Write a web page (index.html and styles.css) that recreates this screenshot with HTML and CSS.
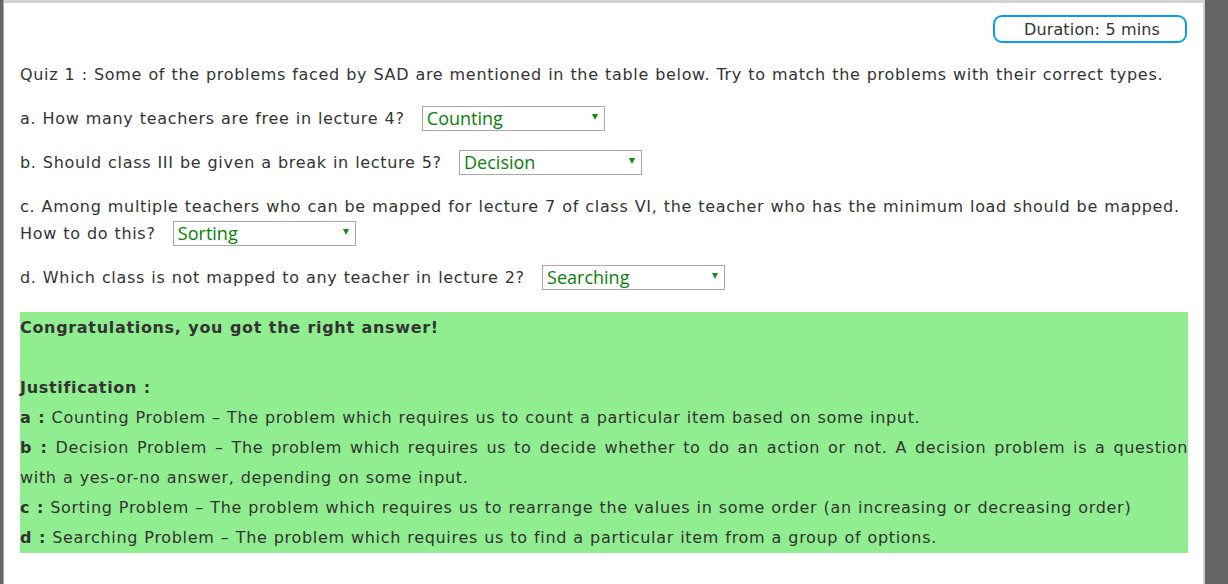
FILE: index.html
```html
<!DOCTYPE html>
<html lang="en">
<head>
<meta charset="utf-8">
<title>Quiz 1</title>
<link rel="stylesheet" href="styles.css">
</head>
<body>
<div class="frame">
  <div class="edge-left"></div>
  <main class="main">
    <div class="duration-row">
      <div class="duration">Duration: 5 mins</div>
    </div>
    <p class="q first">Quiz 1 : Some of the problems faced by SAD are mentioned in the table below. Try to match the problems with their correct types.</p>
    <p class="q">a. How many teachers are free in lecture 4? <span class="select"><span class="val">Counting</span><span class="arrow"></span></span></p>
    <p class="q">b. Should class III be given a break in lecture 5? <span class="select"><span class="val">Decision</span><span class="arrow"></span></span></p>
    <p class="q">c. Among multiple teachers who can be mapped for lecture 7 of class VI, the teacher who has the minimum load should be mapped. How to do this? <span class="select"><span class="val">Sorting</span><span class="arrow"></span></span></p>
    <p class="q last">d. Which class is not mapped to any teacher in lecture 2? <span class="select"><span class="val">Searching</span><span class="arrow"></span></span></p>
    <div class="result">
      <b>Congratulations, you got the right answer!</b><br><br>
      <b>Justification :</b><br>
      <b>a :</b> Counting Problem &ndash; The problem which requires us to count a particular item based on some input.<br>
      <b>b :</b> Decision Problem &ndash; The problem which requires us to decide whether to do an action or not. A decision problem is a question with a yes-or-no answer, depending on some input.<br>
      <b>c :</b> Sorting Problem &ndash; The problem which requires us to rearrange the values in some order (an increasing or decreasing order)<br>
      <b>d :</b> Searching Problem &ndash; The problem which requires us to find a particular item from a group of options.
    </div>
  </main>
  <div class="edge-right"></div>
</div>
</body>
</html>
```

FILE: styles.css
```css
html, body {
  margin: 0;
  padding: 0;
  background: #ffffff;
}

.frame {
  display: flex;
  height: 584px;
  overflow: hidden;
}

.edge-left {
  width: 3px;
  background: #666666;
  border-right: 1px solid #a8a8a8;
  flex: none;
}

.edge-right {
  width: 23px;
  background: #646464;
  border-left: 2px solid #cfcfcf;
  flex: none;
}

.main {
  flex: 1;
  border-top: 3px solid #d4d4d4;
  padding: 12px 15px 0 16px;
  font-family: "DejaVu Sans", Verdana, sans-serif;
  font-size: 16px;
  letter-spacing: 0.68px;
  word-spacing: 0.5px;
  color: #333333;
}

.duration-row {
  display: flex;
  justify-content: flex-end;
  padding-right: 1px;
}

.duration {
  width: 186px;
  height: 22px;
  border: 2px solid #0a9bf5;
  border-radius: 9px;
  display: flex;
  align-items: center;
  justify-content: center;
  line-height: 22px;
  padding: 2px 0 0 4px;
  box-sizing: content-box;
  letter-spacing: 0.15px;
  word-spacing: 0;
}

.q {
  margin: 17px 0 0 0;
  line-height: 27px;
}

.q.first {
  margin-top: 18px;
}

.q.last {
  margin-bottom: 21px;
}

.select {
  display: inline-flex;
  align-items: center;
  justify-content: space-between;
  box-sizing: border-box;
  width: 183px;
  height: 25px;
  border: 1px solid #a9a9a9;
  padding: 0 6px 0 4px;
  margin-left: 11px;
  vertical-align: middle;
  position: relative;
  top: -1px;
  font-family: "Open Sans", "Liberation Sans", sans-serif;
  font-size: 18px;
  letter-spacing: 0;
  word-spacing: 0;
  color: #0a800a;
  line-height: 23px;
}

.arrow {
  width: 0;
  height: 0;
  border-left: 3px solid transparent;
  border-right: 3px solid transparent;
  border-top: 6px solid #138a13;
  margin-top: -4px;
}

.result {
  background: #90ee90;
  line-height: 30px;
  padding-top: 1px;
  text-align: justify;
}

.result b {
  font-weight: bold;
}
```
